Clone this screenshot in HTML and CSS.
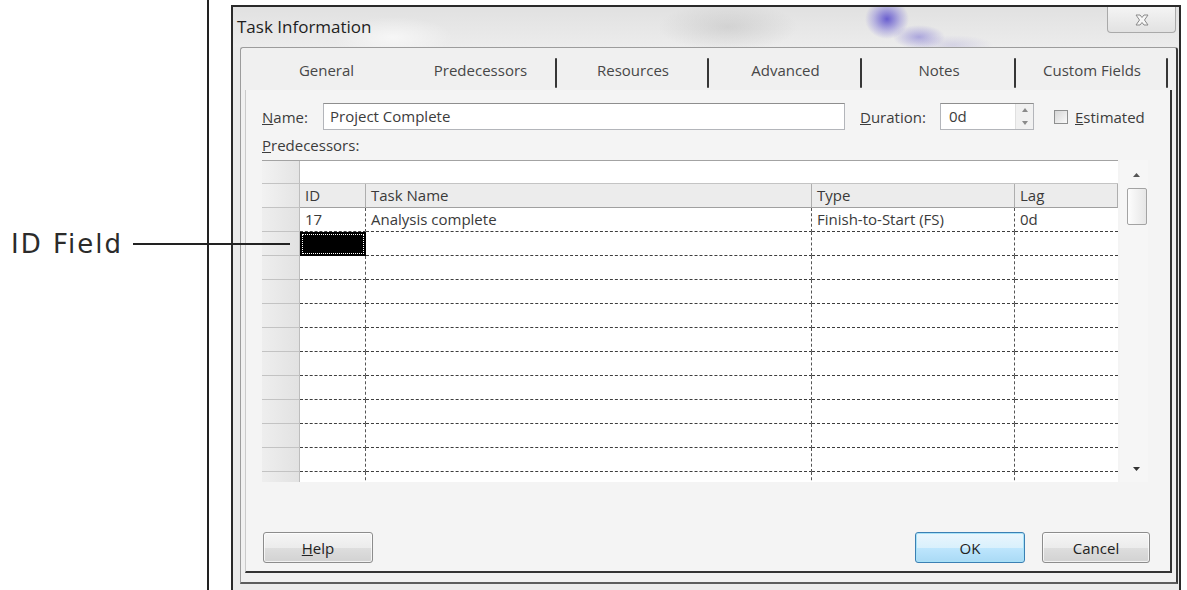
FILE: index.html
```html
<!DOCTYPE html>
<html lang="en">
<head>
<meta charset="utf-8">
<title>Task Information</title>
<link rel="stylesheet" href="styles.css">
</head>
<body>
<div class="page">
  <aside class="callout">
    <span class="callout-label">ID Field</span>
    <span class="callout-line"></span>
  </aside>
  <div class="rule"></div>

  <section class="dialog">
    <header class="titlebar">
      <span class="title">Task Information</span>
      <button class="close" type="button" aria-label="Close">
        <svg width="14" height="12" viewBox="0 0 14 12">
          <path d="M1 1H5L7 3.5L9 1H13L9.5 6L13 11H9L7 8.5L5 11H1L4.5 6Z" fill="#f6f6f6" stroke="#8a8a8a" stroke-width="1" stroke-linejoin="round"/>
        </svg>
      </button>
    </header>

    <div class="frame">
      <nav class="tabs">
        <span class="tab tab-general">General</span>
        <span class="tab tab-pred sep">Predecessors</span>
        <span class="tab tab-res sep">Resources</span>
        <span class="tab tab-adv sep">Advanced</span>
        <span class="tab tab-notes sep">Notes</span>
        <span class="tab tab-custom sep">Custom Fields</span>
      </nav>

      <div class="panel">
        <div class="fields">
          <span class="lbl name-lbl"><u>N</u>ame:</span>
          <div class="input name-input">Project Complete</div>
          <span class="lbl dur-lbl"><u>D</u>uration:</span>
          <div class="input dur-input">
            <span class="dur-value">0d</span>
            <span class="spin">
              <span class="spin-btn"><svg width="6" height="4" viewBox="0 0 6 4"><path d="M0 4L3 0L6 4Z" fill="#8a8a8a"/></svg></span>
              <span class="spin-btn"><svg width="6" height="4" viewBox="0 0 6 4"><path d="M0 0L3 4L6 0Z" fill="#8a8a8a"/></svg></span>
            </span>
          </div>
          <span class="check"></span>
          <span class="lbl est-lbl"><u>E</u>stimated</span>
        </div>

        <div class="lbl pred-lbl"><u>P</u>redecessors:</div>

        <div class="grid">
          <div class="table">
            <div class="tr edit-row">
              <div class="rh"></div>
              <div class="edit-cell"></div>
            </div>
            <div class="tr head-row">
              <div class="rh"></div>
              <div class="th c-id">ID</div>
              <div class="th c-name">Task Name</div>
              <div class="th c-type">Type</div>
              <div class="th c-lag">Lag</div>
            </div>
            <div class="rows">
              <div class="tr">
                <div class="rh"></div>
                <div class="td c-id">17</div>
                <div class="td c-name">Analysis complete</div>
                <div class="td c-type">Finish-to-Start (FS)</div>
                <div class="td c-lag">0d</div>
              </div>
              <div class="tr">
                <div class="rh"></div>
                <div class="td c-id selected"></div>
                <div class="td c-name"></div>
                <div class="td c-type"></div>
                <div class="td c-lag"></div>
              </div>
              <div class="tr"><div class="rh"></div><div class="td c-id"></div><div class="td c-name"></div><div class="td c-type"></div><div class="td c-lag"></div></div>
              <div class="tr"><div class="rh"></div><div class="td c-id"></div><div class="td c-name"></div><div class="td c-type"></div><div class="td c-lag"></div></div>
              <div class="tr"><div class="rh"></div><div class="td c-id"></div><div class="td c-name"></div><div class="td c-type"></div><div class="td c-lag"></div></div>
              <div class="tr"><div class="rh"></div><div class="td c-id"></div><div class="td c-name"></div><div class="td c-type"></div><div class="td c-lag"></div></div>
              <div class="tr"><div class="rh"></div><div class="td c-id"></div><div class="td c-name"></div><div class="td c-type"></div><div class="td c-lag"></div></div>
              <div class="tr"><div class="rh"></div><div class="td c-id"></div><div class="td c-name"></div><div class="td c-type"></div><div class="td c-lag"></div></div>
              <div class="tr"><div class="rh"></div><div class="td c-id"></div><div class="td c-name"></div><div class="td c-type"></div><div class="td c-lag"></div></div>
              <div class="tr"><div class="rh"></div><div class="td c-id"></div><div class="td c-name"></div><div class="td c-type"></div><div class="td c-lag"></div></div>
              <div class="tr"><div class="rh"></div><div class="td c-id"></div><div class="td c-name"></div><div class="td c-type"></div><div class="td c-lag"></div></div>
              <div class="tr"><div class="rh"></div><div class="td c-id"></div><div class="td c-name"></div><div class="td c-type"></div><div class="td c-lag"></div></div>
            </div>
          </div>

          <div class="scroll">
            <span class="arrow up"><svg width="7" height="4" viewBox="0 0 7 4"><path d="M0 4L3.5 0L7 4Z" fill="#555"/></svg></span>
            <span class="thumb"></span>
            <span class="arrow down"><svg width="7" height="4" viewBox="0 0 7 4"><path d="M0 0L3.5 4L7 0Z" fill="#333"/></svg></span>
          </div>
        </div>

        <div class="buttons">
          <button class="btn" type="button"><u>H</u>elp</button>
          <button class="btn btn-default" type="button">OK</button>
          <button class="btn btn-cancel" type="button">Cancel</button>
        </div>
      </div>
    </div>
  </section>
</div>
</body>
</html>
```

FILE: styles.css
```css
html, body {
  margin: 0;
  padding: 0;
}

body {
  width: 1187px;
  height: 590px;
  overflow: hidden;
  background: #fff;
  font-family: "Open Sans", "DejaVu Sans", sans-serif;
}

.page {
  display: flex;
  height: 590px;
}

/* ---- callout on the left ---- */
.callout {
  position: relative;
  width: 207px;
  flex: none;
}

.callout-label {
  display: block;
  margin-top: 229px;
  padding-left: 11px;
  font: 26px/30px "DejaVu Sans", sans-serif;
  letter-spacing: 2px;
  color: #2b2b2b;
}

.callout-line {
  position: absolute;
  left: 133px;
  top: 243px;
  width: 157px;
  height: 2px;
  background: #222;
  z-index: 2;
}

.rule {
  width: 2px;
  flex: none;
  background: #222;
}

/* ---- dialog window ---- */
.dialog {
  flex: none;
  margin: 5px 0 0 22px;
  width: 950px;
  height: 600px;
  box-sizing: border-box;
  border: 2px solid #2a2a2a;
  border-bottom: none;
  background: #ebebeb;
  display: flex;
  flex-direction: column;
}

.titlebar {
  flex: none;
  height: 40px;
  display: flex;
  align-items: flex-start;
  background:
    radial-gradient(ellipse 22px 20px at 654px 12px, rgba(92, 80, 205, 0.9), rgba(120, 110, 215, 0.4) 60%, rgba(255, 255, 255, 0) 100%),
    radial-gradient(ellipse 26px 12px at 686px 30px, rgba(120, 110, 210, 0.55), rgba(255, 255, 255, 0) 100%),
    radial-gradient(ellipse 40px 10px at 720px 38px, rgba(170, 165, 215, 0.35), rgba(255, 255, 255, 0) 100%),
    radial-gradient(ellipse 70px 24px at 495px 20px, rgba(150, 150, 150, 0.25), rgba(255, 255, 255, 0) 100%),
    radial-gradient(ellipse 60px 20px at 160px 30px, rgba(255, 255, 255, 0.6), rgba(255, 255, 255, 0) 100%),
    linear-gradient(#e1e1e1, #ececec);
}

.title {
  margin: 10px 0 0 4px;
  font-size: 17px;
  line-height: 20px;
  color: #1e1e1e;
}

.close {
  margin-left: auto;
  margin-right: 3px;
  width: 69px;
  height: 26px;
  padding: 0;
  border: 1px solid #a9a9a9;
  border-top: none;
  border-radius: 0 0 4px 4px;
  background: linear-gradient(#f4f4f4, #e2e2e2);
  display: flex;
  align-items: center;
  justify-content: center;
}

.frame {
  flex: none;
  height: 537px;
  box-sizing: border-box;
  margin: 0 1px 0 7px;
  border: 1px solid #9c9c9c;
  border-right: 2px solid #3a3a3a;
  border-bottom: 2px solid #5c5c5c;
  border-radius: 3px 3px 0 0;
  background: #f0f0f0;
  display: flex;
  flex-direction: column;
}

/* ---- tabs ---- */
.tabs {
  flex: none;
  height: 42px;
  padding-left: 8px;
  display: flex;
}

.tab {
  position: relative;
  display: flex;
  align-items: center;
  justify-content: center;
  padding-top: 2px;
  font-size: 15px;
  color: #474747;
}

.tab.sep::after {
  content: "";
  position: absolute;
  right: 0;
  top: 10px;
  bottom: 2px;
  width: 2px;
  border-radius: 1px;
  background: #363636;
}

.tab-general { width: 155px; }
.tab-pred { width: 153px; }
.tab-res { width: 152px; }
.tab-adv { width: 153px; }
.tab-notes { width: 154px; }
.tab-custom { width: 152px; }

/* ---- tab page ---- */
.panel {
  flex: 1;
  margin: 0 4px 9px 4px;
  padding: 0 20px 0 16px;
  border-left: 1px solid #cacaca;
  border-right: 2px solid #333;
  border-bottom: 2px solid #333;
  background: #f4f4f4;
  display: flex;
  flex-direction: column;
}

.lbl {
  font-size: 15px;
  color: #3c3c3c;
}

.fields {
  display: flex;
  align-items: center;
  height: 27px;
  margin-top: 13px;
}

.name-lbl { width: 61px; flex: none; }

.input {
  flex: none;
  box-sizing: border-box;
  height: 27px;
  border: 1px solid #b3b5ba;
  border-top-color: #8e8e8e;
  background: #fff;
  font-size: 15px;
  line-height: 25px;
  padding-left: 6px;
  color: #3c3c3c;
}

.name-input { width: 522px; }

.dur-lbl {
  width: 80px;
  margin-left: 15px;
  flex: none;
}

.dur-input {
  width: 94px;
  padding-left: 8px;
  display: flex;
}

.spin {
  margin-left: auto;
  width: 17px;
  display: flex;
  flex-direction: column;
  background: #f1f1f1;
  border-left: 1px solid #e0e0e0;
}

.spin-btn {
  flex: 1;
  display: flex;
  align-items: center;
  justify-content: center;
}

.check {
  flex: none;
  width: 14px;
  height: 14px;
  margin-left: 20px;
  box-sizing: border-box;
  border: 1px solid #8e8f8f;
  background: linear-gradient(135deg, #d6d6d6, #fafafa);
}

.est-lbl { margin-left: 7px; }

.pred-lbl {
  margin-top: 6px;
  height: 18px;
  line-height: 18px;
}

/* ---- predecessor grid ---- */
.grid {
  flex: none;
  margin-top: 6px;
  height: 322px;
  display: flex;
  gap: 2px;
}

.table {
  width: 856px;
  flex: none;
  display: flex;
  flex-direction: column;
}

.tr {
  flex: none;
  display: flex;
  height: 24px;
}

.rh {
  flex: none;
  width: 38px;
  box-sizing: border-box;
  background: linear-gradient(90deg, #f2f2f2, #e4e4e4);
  border-bottom: 1px solid #c3c3c3;
  border-right: 1px solid #bdbdbd;
}

.edit-row {
  border-top: 1px solid #a3a3a3;
  box-sizing: border-box;
}

.edit-cell {
  flex: 1;
  background: #fff;
  border-bottom: 1px solid #c4c4c4;
}

.th,
.td {
  flex: none;
  box-sizing: border-box;
  padding-left: 5px;
  font-size: 15px;
  line-height: 23px;
  color: #3a3a3a;
  white-space: nowrap;
  overflow: hidden;
}

.th {
  background: #ececec;
  border-right: 1px solid #aeaeae;
  border-bottom: 1px solid #a0a0a0;
}

.c-id { width: 66px; }
.c-name { width: 446px; }
.c-type { width: 203px; }
.c-lag { width: 103px; }

.rows {
  height: 274px;
  overflow: hidden;
  background: #fff;
}

.rows .rh {
  background: linear-gradient(90deg, #eeeeee, #e2e2e2);
}

.td {
  background: #fff;
  border-right: 1px dashed #555;
  border-bottom: 1px dashed #3e3e3e;
}

.td.c-lag { border-right: none; }

.td.selected {
  background: #000;
  border-color: #000;
  outline: 1px dotted #fff;
  outline-offset: -3px;
}

/* ---- vertical scrollbar ---- */
.scroll {
  width: 28px;
  flex: none;
  box-sizing: border-box;
  padding: 12px 1px 10px 6px;
  display: flex;
  flex-direction: column;
  align-items: center;
  background: #f6f6f6;
}

.arrow {
  display: flex;
  height: 6px;
  align-items: center;
}

.thumb {
  margin-top: 10px;
  width: 20px;
  height: 37px;
  box-sizing: border-box;
  border: 1px solid #a3a3a3;
  border-radius: 2px;
  background: linear-gradient(90deg, #fdfdfd, #e6e6e6);
}

.arrow.down { margin-top: auto; }

/* ---- buttons ---- */
.buttons {
  display: flex;
  margin-top: 50px;
  padding-left: 1px;
}

.btn {
  width: 110px;
  height: 31px;
  padding: 0;
  box-sizing: border-box;
  border: 1px solid #8c8c8c;
  border-radius: 3px;
  background: linear-gradient(#f5f5f5 0%, #ececec 50%, #dedede 51%, #d2d2d2 100%);
  box-shadow: inset 0 0 0 1px rgba(255, 255, 255, 0.7);
  font-family: "Open Sans", "DejaVu Sans", sans-serif;
  font-size: 15px;
  color: #222;
}

.btn-default {
  margin-left: auto;
  border-color: #3b7fb3;
  background: linear-gradient(#eaf6fd 0%, #d9f0fc 50%, #bee6fd 51%, #a9daf5 100%);
  box-shadow: inset 0 0 0 1px #a8e2f8;
}

.btn-cancel {
  width: 108px;
  margin-left: 17px;
}
```
